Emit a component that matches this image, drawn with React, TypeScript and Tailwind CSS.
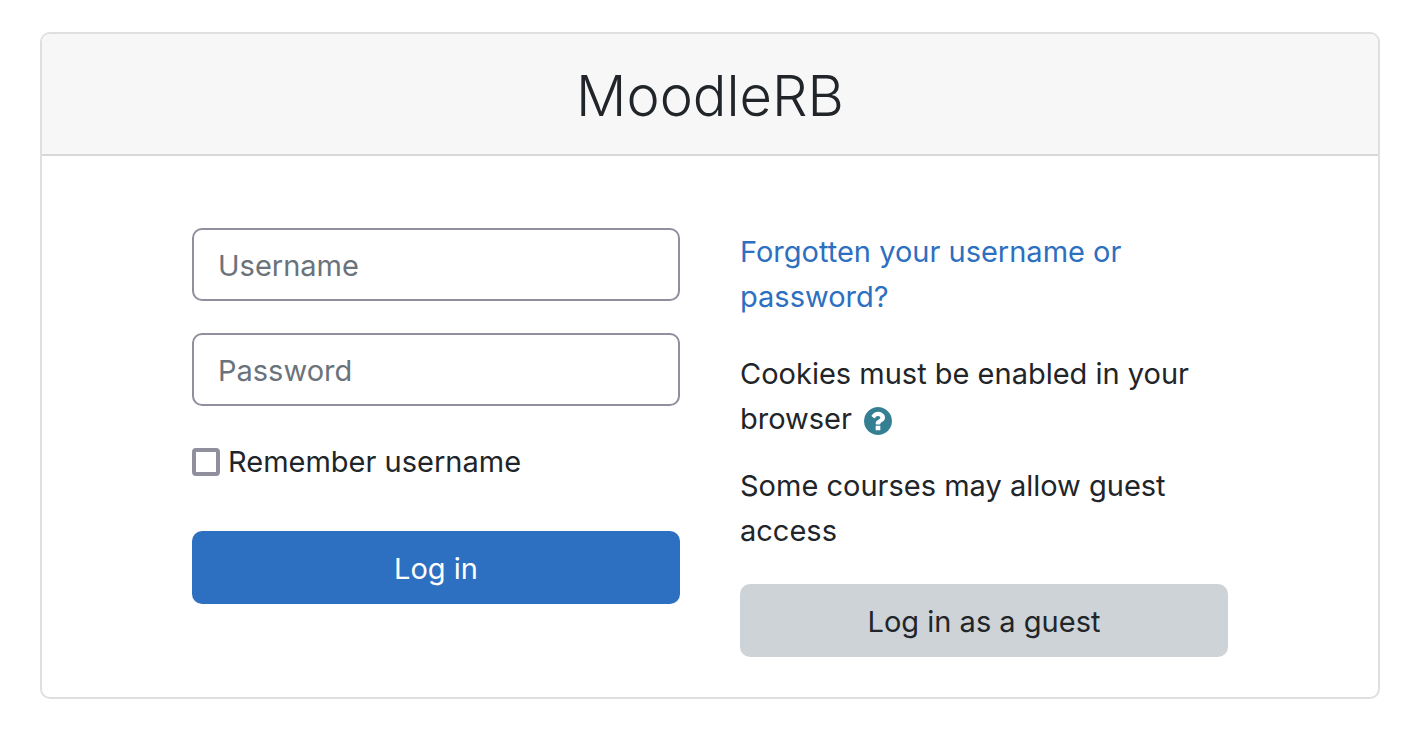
import { useState } from 'react';

const inputClass =
  'block h-[73px] w-full rounded-[10px] border-2 border-[#8f8f9d] bg-white px-6 pt-0.5 text-[29px] text-[#495057] placeholder:text-[#6a737b] focus:border-[#2d6fc0] focus:outline-none';

/** Solid circled question mark with a square dot. */
function HelpIcon({ className }: { className?: string }) {
  return (
    <svg viewBox="128 128 1536 1536" fill="currentColor" aria-hidden="true" className={className}>
      <path d="M1024 1376v-192q0 -14 -9 -23t-23 -9h-192q-14 0 -23 9t-9 23v192q0 14 9 23t23 9h192q14 0 23 -9t9 -23zM1280 704q0 -88 -55.5 -163t-138.5 -116t-170 -41q-243 0 -371 213q-15 24 8 42l132 100q7 6 19 6q16 0 25 -12q53 -68 86 -92q34 -24 86 -24q48 0 85.5 26t37.5 59q0 38 -20 61t-68 45q-63 28 -115.5 86.5t-52.5 125.5v36q0 14 9 23t23 9h192q14 0 23 -9t9 -23q0 -19 21.5 -49.5t54.5 -49.5q32 -18 49 -28.5t46 -35t44.5 -48t28 -60.5t12.5 -81zM1664 896q0 209 -103 385.5t-279.5 279.5t-385.5 103t-385.5 -103t-279.5 -279.5t-103 -385.5t103 -385.5t279.5 -279.5t385.5 -103t385.5 103t279.5 279.5t103 385.5z" />
    </svg>
  );
}

function LoginForm() {
  const [username, setUsername] = useState('');
  const [password, setPassword] = useState('');
  const [remember, setRemember] = useState(false);

  return (
    <form onSubmit={e => e.preventDefault()}>
      <input
        type="text"
        aria-label="Username"
        placeholder="Username"
        autoComplete="username"
        value={username}
        onChange={e => setUsername(e.target.value)}
        className={inputClass}
      />
      <div className="mt-8">
        <input
          type="password"
          aria-label="Password"
          placeholder="Password"
          autoComplete="current-password"
          value={password}
          onChange={e => setPassword(e.target.value)}
          className={inputClass}
        />
      </div>
      <div className="mt-8 flex items-center gap-2 pt-px">
        <input
          id="remember"
          type="checkbox"
          checked={remember}
          onChange={e => setRemember(e.target.checked)}
          className="size-7 shrink-0 appearance-none rounded-[4px] border-4 border-[#8f8f9d] bg-white checked:bg-[#2d6fc0]"
        />
        <label htmlFor="remember">Remember username</label>
      </div>
      <button type="submit" className="mt-[47px] h-[73px] w-full rounded-[10px] bg-[#2d6fc0] pt-0.5 text-white hover:bg-[#265ea3]">
        Log in
      </button>
    </form>
  );
}

function LoginHelp() {
  return (
    <div className="pt-px">
      <p>
        <a href="#forgot" className="text-[#2d6fc0] hover:underline">Forgotten your username or password?</a>
      </p>
      <div className="mt-8">
        Cookies must be enabled in your browser
        <button type="button" aria-label="Help with cookies" className="ml-3 inline-block align-middle leading-none text-[#357f93]">
          <HelpIcon className="size-7" />
        </button>
      </div>
      <p className="mt-[22px]">Some courses may allow guest access</p>
      <button type="button" className="mt-[31px] h-[73px] w-full rounded-[10px] bg-[#ced3d7] pt-0.5 hover:bg-[#b8bfc6]">
        Log in as a guest
      </button>
    </div>
  );
}

export default function App() {
  return (
    <main className="py-8 pr-[38px] pl-10 font-['Inter','Liberation_Sans',sans-serif] text-[29px] leading-[45px] text-[#212529]">
      <section className="overflow-hidden rounded-[10px] border-2 border-[#dfdfdf] bg-white">
        <header className="border-b-2 border-[#d8d8d8] bg-[#f7f7f7] pt-[26px] pb-[22px]">
          <h1 className="text-center text-[56px] font-light leading-[72px]">MoodleRB</h1>
        </header>
        <div className="mx-auto grid max-w-[1036px] grid-cols-2 gap-15 pt-18 pb-10">
          <LoginForm />
          <LoginHelp />
        </div>
      </section>
    </main>
  );
}
